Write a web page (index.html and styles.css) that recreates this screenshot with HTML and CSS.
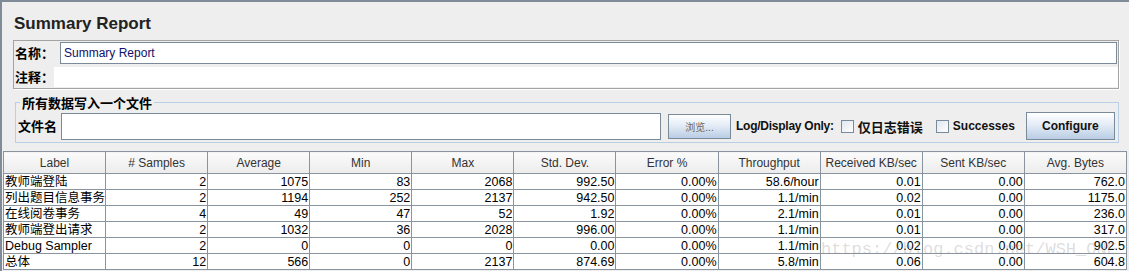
FILE: index.html
```html
<!DOCTYPE html>
<html lang="zh-CN">
<head>
    <meta charset="UTF-8">
    <title>Summary Report</title>
    <link rel="stylesheet" href="styles.css">
</head>
<body>
    <div class="frame">
        <h1 class="title">Summary Report</h1>

        <!-- 名称 / 注释 -->
        <div class="name-box">
            <div class="name-row">
                <span class="label">名称：</span>
                <div class="field">Summary Report</div>
            </div>
            <div class="comment-row">
                <span class="label">注释：</span>
                <div class="comment"></div>
            </div>
        </div>

        <!-- 文件 -->
        <fieldset class="file-set">
            <legend>所有数据写入一个文件</legend>
            <div class="file-row">
                <span class="label">文件名</span>
                <div class="field file-field"></div>
                <button class="btn browse">浏览...</button>
                <span class="log-label">Log/Display Only:</span>
                <span class="check"></span>
                <span class="check-text">仅日志错误</span>
                <span class="check"></span>
                <span class="check-text latin">Successes</span>
                <button class="btn configure">Configure</button>
            </div>
        </fieldset>

        <!-- 结果表 -->
        <div class="table-wrap">
            <table class="report">
                <thead>
                    <tr>
                        <th>Label</th><th># Samples</th><th>Average</th><th>Min</th><th>Max</th><th>Std. Dev.</th><th>Error %</th><th>Throughput</th><th>Received KB/sec</th><th>Sent KB/sec</th><th>Avg. Bytes</th>
                    </tr>
                </thead>
                <tbody>
                    <tr><td>教师端登陆</td><td>2</td><td>1075</td><td>83</td><td>2068</td><td>992.50</td><td>0.00%</td><td>58.6/hour</td><td>0.01</td><td>0.00</td><td>762.0</td></tr>
                    <tr><td>列出题目信息事务</td><td>2</td><td>1194</td><td>252</td><td>2137</td><td>942.50</td><td>0.00%</td><td>1.1/min</td><td>0.02</td><td>0.00</td><td>1175.0</td></tr>
                    <tr><td>在线阅卷事务</td><td>4</td><td>49</td><td>47</td><td>52</td><td>1.92</td><td>0.00%</td><td>2.1/min</td><td>0.01</td><td>0.00</td><td>236.0</td></tr>
                    <tr><td>教师端登出请求</td><td>2</td><td>1032</td><td>36</td><td>2028</td><td>996.00</td><td>0.00%</td><td>1.1/min</td><td>0.01</td><td>0.00</td><td>317.0</td></tr>
                    <tr><td>Debug Sampler</td><td>2</td><td>0</td><td>0</td><td>0</td><td>0.00</td><td>0.00%</td><td>1.1/min</td><td>0.02</td><td>0.00</td><td>902.5</td></tr>
                    <tr><td>总体</td><td>12</td><td>566</td><td>0</td><td>2137</td><td>874.69</td><td>0.00%</td><td>5.8/min</td><td>0.06</td><td>0.00</td><td>604.8</td></tr>
                </tbody>
            </table>
            <div class="watermark">https://blog.csdn.net/WSH_ONE</div>
        </div>
    </div>
</body>
</html>
```

FILE: styles.css
```css
/* 全局 */
* {
    margin: 0;
    padding: 0;
    box-sizing: border-box;
}

body {
    width: 1129px;
    height: 271px;
    overflow: hidden;
    background: #eeeeee;
    font-family: 'Liberation Sans', Arial, 'Noto Sans CJK SC', sans-serif;
    font-size: 12px;
    color: #000;
}

/* 外框 */
.frame {
    height: 271px;
    border-top: 2px solid #7f8b99;
    border-left: 2px solid #7f8b99;
    padding: 0 10px 0 11px;
}

.title {
    font-size: 17px;
    line-height: 20px;
    font-weight: bold;
    color: #222;
    margin: 12px 0 6px 1px;
}

.label {
    flex-shrink: 0;
    font-size: 13px;
    font-weight: bold;
    white-space: nowrap;
    font-family: 'Noto Sans CJK SC', 'Liberation Sans', sans-serif;
    line-height: 16px;
}

/* 名称 / 注释 */
.name-box {
    border: 1px solid #a3a3a3;
    box-shadow: 1px 1px 0 #fff;
    padding: 1px 0 0 1px;
    height: 49px;
}

.name-row {
    display: flex;
    align-items: center;
    gap: 6px;
    padding-right: 1px;
}

.field {
    flex: 1;
    height: 22px;
    background: #fff;
    border: 1px solid #7a8a99;
    padding: 0 3px;
    line-height: 20px;
    font-size: 12px;
    color: #10106a;
}

.comment-row {
    display: flex;
    align-items: center;
    margin-top: 3px;
}

.comment {
    flex: 1;
    height: 20px;
    background: #fff;
}

/* 文件 */
.file-set {
    border: 1px solid #b8cfe5;
    margin: 6px 0 0 2px;
    padding: 0 3px 1px 2px;
    width: 1104px;
    height: 48px;
}

.file-set legend {
    font-size: 13px;
    font-weight: bold;
    font-family: 'Noto Sans CJK SC', sans-serif;
    line-height: 15px;
    padding: 0 2px;
    margin-left: 2px;
}

.file-row {
    display: flex;
    align-items: center;
    white-space: nowrap;
    margin-top: 2px;
}

.file-row > * {
    flex-shrink: 0;
}

.file-row .label {
    margin-right: 4px;
}

.file-row .file-field {
    flex: none;
    width: 600px;
    height: 27px;
}

.btn {
    font-family: inherit;
    border: 1px solid #7a8a99;
    background: linear-gradient(#ffffff, #e4ecf6 45%, #b9cde4);
    color: #111;
}

.browse {
    width: 63px;
    height: 25px;
    margin-left: 7px;
    font-size: 10px;
    color: #666;
    font-family: 'Noto Sans CJK SC', sans-serif;
}

.log-label {
    font-weight: bold;
    margin-left: 5px;
    letter-spacing: -0.25px;
    color: #111;
}

.check {
    width: 13px;
    height: 13px;
    border: 1px solid #7a8a99;
    background: linear-gradient(135deg, #dfe7f1, #ffffff);
    margin-left: 7px;
}

.check-text {
    font-weight: bold;
    font-size: 13px;
    margin-left: 4px;
    color: #111;
    font-family: 'Noto Sans CJK SC', sans-serif;
}

.check-text + .check {
    margin-left: 13px;
}

.check-text.latin {
    font-size: 12px;
    font-family: 'Liberation Sans', sans-serif;
}

.configure {
    width: 89px;
    height: 28px;
    margin-left: 11px;
    font-weight: bold;
    font-size: 12px;
}

/* 结果表 */
.table-wrap {
    position: relative;
    margin: 8px -9px 0 -10px;
}

.report {
    width: 1124px;
    border-collapse: collapse;
    table-layout: fixed;
    background: #fff;
}

.report th,
.report td {
    border: 1px solid #8a949f;
    white-space: nowrap;
    overflow: hidden;
}

.report th {
    height: 22px;
    font-weight: normal;
    color: #333;
    background: linear-gradient(#fbfbfb, #ececec);
    text-align: center;
}

.report td {
    height: 16px;
    line-height: 14px;
    text-align: right;
    padding: 0 1px;
    font-size: 12.5px;
}

.report td:first-child {
    text-align: left;
    font-family: 'Liberation Sans', 'Noto Sans CJK SC', sans-serif;
}

.watermark {
    position: absolute;
    left: 818px;
    top: 89px;
    font-family: 'Liberation Mono', monospace;
    font-size: 17px;
    color: rgba(140, 140, 140, 0.3);
    white-space: nowrap;
}
```
